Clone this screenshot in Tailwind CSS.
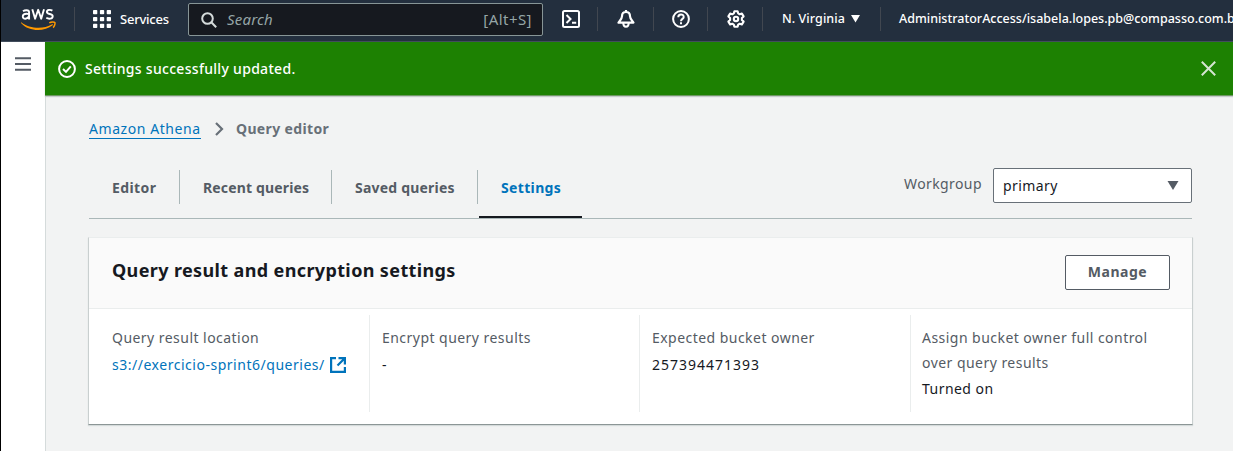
<!DOCTYPE html>
<html lang="en">
<head>
<meta charset="utf-8">
<title>Query editor settings</title>
<script src="https://cdn.jsdelivr.net/npm/@tailwindcss/browser@4"></script>
</head>
<body class="h-[451px] overflow-hidden bg-[#f2f3f3] font-['Noto_Sans','Open_Sans',sans-serif] text-[14px] tracking-[0.46px] text-[#16191f]">
<div class="flex h-[451px] w-[1233px] flex-col overflow-hidden border-l border-black">
  <header class="flex h-[42px] shrink-0 items-start overflow-hidden border-b border-[#414d5c] bg-[#232f3e] whitespace-nowrap text-white *:shrink-0">
    <svg class="mt-[8px] ml-[20px] h-[23px] w-[35px]" viewBox="0 0 35 23" fill="none">
      <g stroke="#fff" stroke-width="1.9" stroke-linejoin="round">
        <path d="M2 3.3C3.3 2.3 8.1 1.1 8.1 4.6V11.5M8 6.1C5.4 5.5 1.8 5.6 1.8 8.5c0 3.2 5 2.8 6.2-.3"/>
        <path d="M11.3 1.3 14.1 10.7 17.2 1.8 20.2 10.7 23 1.3"/>
        <path d="M31.4 2.6C29.4 1.5 25.9 1.6 25.9 3.9 25.9 6.7 31.7 5.2 31.7 8.2 31.7 11 27.7 11.3 25.3 9.8"/>
      </g>
      <path d="M.5 14.4C8 20.1 21.5 22 31.2 16.2c.8-.3 1.3.4.5 1C23 24.2 7.500 23.500.2 15.2c-.5-.6-.1-1 .3-.8z" fill="#f90"/>
      <path d="M28.300 14.900c2.100-1.400 5-1.100 5.500-.5.500.7-.1 3.700-1.700 5.200" stroke="#f90" stroke-width="1.500"/>
    </svg>
    <div class="mt-[7px] ml-[18px] h-6 w-px bg-[#414750]"></div>
    <svg class="mt-[10px] ml-[18px] size-[18px]" viewBox="0 0 18 18" fill="#fff">
      <rect width="4.300" height="4.300" rx=".8"/><rect x="6.900" width="4.300" height="4.300" rx=".8"/><rect x="13.700" width="4.300" height="4.300" rx=".8"/>
      <rect y="6.900" width="4.300" height="4.300" rx=".8"/><rect x="6.900" y="6.900" width="4.300" height="4.300" rx=".8"/><rect x="13.700" y="6.900" width="4.300" height="4.300" rx=".8"/>
      <rect y="13.700" width="4.300" height="4.300" rx=".8"/><rect x="6.900" y="13.700" width="4.300" height="4.300" rx=".8"/><rect x="13.700" y="13.700" width="4.300" height="4.300" rx=".8"/>
    </svg>
    <span class="mt-[9px] ml-[9px] w-[68px] text-[13px] leading-5 font-medium tracking-[-0.22px]">Services</span>
    <div class="mt-[3px] flex h-[33px] w-[355px] items-center rounded-[2px] border border-[#879596] bg-[#16191f] pr-[10px] pl-[12px] text-[#95a5a6]">
      <svg class="size-4 shrink-0" viewBox="0 0 16 16" fill="none" stroke="#d5dbdb" stroke-width="2"><circle cx="6.500" cy="6.500" r="5.300"/><path d="m10.300 10.300 4.900 4.900"/></svg>
      <span class="ml-[10px] flex-1 text-[15px] tracking-[0.2px] italic">Search</span>
      <span class="text-[15px] tracking-[0.45px]">[Alt+S]</span>
    </div>
    <svg class="mt-[10px] ml-[19px] size-[18px]" viewBox="0 0 18 18" fill="none" stroke="#fff" stroke-width="2"><rect x="1" y="1" width="16" height="16" rx="1.500"/><path d="m4.500 5 4 4-4 4M10 12.700h4.200"/></svg>
    <div class="mt-[7px] ml-[17px] h-6 w-px bg-[#414750]"></div>
    <svg class="mt-[10px] ml-[19px] size-[18px]" viewBox="0 0 18 18" fill="none" stroke="#fff" stroke-width="2.200" stroke-linejoin="round"><path d="M9 2C6.300 2 5 4 5 6.200 5 8.800 3.700 10 1.500 12.600H16.500C14.300 10 13 8.800 13 6.200 13 4 11.700 2 9 2zM9 0v2"/><path d="M6.300 13c0 5 5.400 5 5.400 0" stroke-width="2"/></svg>
    <div class="mt-[7px] ml-[18px] h-6 w-px bg-[#414750]"></div>
    <svg class="mt-[10px] ml-[18px] size-[18px]" viewBox="0 0 18 18" fill="none" stroke="#fff" stroke-width="2"><circle cx="9" cy="9" r="7.900"/><path d="M6.300 7.200C6.300 3.600 11.700 3.700 11.700 6.900 11.700 9 9 8.800 9 11.200M9 12.300v1.900"/></svg>
    <div class="mt-[7px] ml-[17px] h-6 w-px bg-[#414750]"></div>
    <svg class="mt-[10px] ml-[19px] size-[18px]" viewBox="0 0 18 18" fill="none" stroke="#fff" stroke-width="2.100" stroke-linejoin="round"><path d="M7.400 1.200h3.200l.6 2.200 1.500.9 2.200-.7 1.700 2.800-1.700 1.600v1.900l1.700 1.700-1.700 2.800-2.200-.7-1.500.9-.6 2.200H7.400l-.6-2.200-1.500-.9-2.200.7-1.700-2.800 1.700-1.700V8L1.400 6.400l1.700-2.800 2.200.7 1.500-.9z"/><circle cx="9" cy="9" r="2.200"/></svg>
    <div class="mt-[7px] ml-[17px] h-6 w-px bg-[#414750]"></div>
    <span class="mt-[9px] ml-[19px] w-[69px] text-[12.500px] leading-5 font-medium tracking-[0.08px]">N. Virginia</span>
    <svg class="mt-[14px] h-[9px] w-[9px]" viewBox="0 0 9 9" fill="#fff"><path d="M0 1h9L4.500 8.500z"/></svg>
    <div class="mt-[7px] ml-[20px] h-6 w-px bg-[#414750]"></div>
    <span class="mt-[9px] ml-[18px] text-[12.500px] leading-5 font-medium tracking-[0px]">AdministratorAccess/isabela.lopes.pb@compasso.com.br</span>
  </header>

  <div class="flex min-h-0 flex-1">
    <aside class="w-[44px] shrink-0 bg-white pt-[15px] pl-[14px]">
      <svg class="h-[14px] w-4" viewBox="0 0 16 14" stroke="#545b64" stroke-width="2"><path d="M0 1.200h16M0 7h16M0 12.800h16"/></svg>
    </aside>
    <div class="flex min-w-0 flex-1 flex-col border-l border-[#d5dbdb]">
      <div class="-ml-px flex h-[54px] shrink-0 items-center border-b border-[#6d9861] bg-[#1d8102] pr-[17px] pl-[13px] text-white shadow-[0_1px_1px_#c5cacb]">
        <svg class="size-[18px]" viewBox="0 0 18 18" fill="none" stroke="#fff" stroke-width="2"><circle cx="9" cy="9" r="7.900"/><path d="m5 9 3 2.900L12.800 6.300"/></svg>
        <span class="ml-[9px] flex-1 text-[14px] font-medium tracking-[0.3px]">Settings successfully updated.</span>
        <svg class="size-[15px]" viewBox="0 0 15 15" stroke="#d5e5d2" stroke-width="2"><path d="m.8.8 13.400 13.400M14.200.8.8 14.200"/></svg>
      </div>

      <main class="flex flex-col pr-[41px] pl-[43px]">
        <nav class="mt-[23px] flex h-[20px] items-start leading-5">
          <a class="h-[20px] w-[112px] border-b border-[#0073bb] tracking-[0.56px] whitespace-nowrap text-[#0073bb]">Amazon Athena</a>
          <svg class="mt-[3px] ml-[14px] h-[14px] w-[9px]" viewBox="0 0 9 14" fill="none" stroke="#687078" stroke-width="2.200"><path d="m1 1 6 6-6 6"/></svg>
          <span class="ml-[12px] font-bold tracking-[0.35px] whitespace-nowrap text-[#687078]">Query editor</span>
        </nav>
        <div class="mt-[29px] flex h-[51px] border-b border-[#aab7b8] font-bold tracking-[0.2px] whitespace-nowrap text-[#545b64]">
          <div class="mt-[2px] flex h-[34px] w-[91px] items-center border-r border-[#aab7b8] pl-[23px] tracking-[0.4px]">Editor</div>
          <div class="mt-[2px] flex h-[34px] w-[152px] items-center border-r border-[#aab7b8] pl-[23px] tracking-[0.15px]">Recent queries</div>
          <div class="mt-[2px] flex h-[34px] w-[146px] items-center border-r border-[#aab7b8] pl-[23px]">Saved queries</div>
          <div class="ml-px flex h-[50px] w-[103px] border-b-2 border-[#16191f] pt-[9px] pl-[22px] tracking-[0.35px] text-[#0073bb]">Settings</div>
          <div class="ml-auto flex font-normal tracking-[0.4px]">
            <label class="mt-[6px] w-[89px] leading-5">Workgroup</label>
            <div class="flex h-[35px] w-[199px] items-center justify-between rounded-[2px] border border-[#687078] bg-white pr-[12px] pl-[9px] text-[#16191f]">
              <span>primary</span>
              <svg class="h-[9px] w-[12px]" viewBox="0 0 12 9" fill="#545b64"><path d="M.5 0h11L6 9z"/></svg>
            </div>
          </div>
        </div>

        <section class="-mr-px -ml-px mt-[18px] flex h-[188px] flex-col border border-t-[#eaeded] border-r-[#c9cfcf] border-b-[#8c9696] border-l-[#c9cfcf] bg-white shadow-[0_1px_1px_#d5dbdb]">
          <div class="flex h-[71px] shrink-0 items-start justify-between border-b border-[#eaeded] bg-[#fafafa] pr-[22px] pl-[23px]">
            <h2 class="mt-[19px] text-[18px] leading-[26px] font-bold tracking-[0.37px] whitespace-nowrap">Query result and encryption settings</h2>
            <button class="mt-[17px] h-[35px] w-[105px] rounded-[2px] border border-[#545b64] bg-white pb-[3px] font-bold tracking-[0.5px] text-[#545b64]">Manage</button>
          </div>
          <div class="mt-[6px] flex h-[97px] pl-[23px] leading-[25px] whitespace-nowrap">
            <div class="w-[258px] border-r border-[#eaeded] pt-[10px]">
              <div class="text-[#545b64]">Query result location</div>
              <div class="mt-[2px] flex items-center tracking-[0.52px] text-[#0073bb]"><span class="w-[218px]">s3://exercicio-sprint6/queries/</span>
                <svg class="size-4" viewBox="0 0 16 16" fill="none" stroke="#0073bb" stroke-width="2.200"><path d="M6 1.100H1.100v13.800h13.800V10M8.500 1.100h6.400v6.400M14.500 1.500 7.500 8.500"/></svg></div>
            </div>
            <div class="w-[270px] border-r border-[#eaeded] pt-[10px] pl-[12px]">
              <div class="text-[#545b64]">Encrypt query results</div>
              <div class="mt-[2px]">-</div>
            </div>
            <div class="w-[271px] border-r border-[#eaeded] pt-[10px] pl-[12px]">
              <div class="text-[#545b64]">Expected bucket owner</div>
              <div class="mt-[2px] tracking-[1px]">257394471393</div>
            </div>
            <div class="pt-[10px] pl-[11px]">
              <div class="text-[#545b64]">Assign bucket owner full control<br>over query results</div>
              <div class="mt-[1px]">Turned on</div>
            </div>
          </div>
        </section>
      </main>
    </div>
  </div>
</div>
</body>
</html>
